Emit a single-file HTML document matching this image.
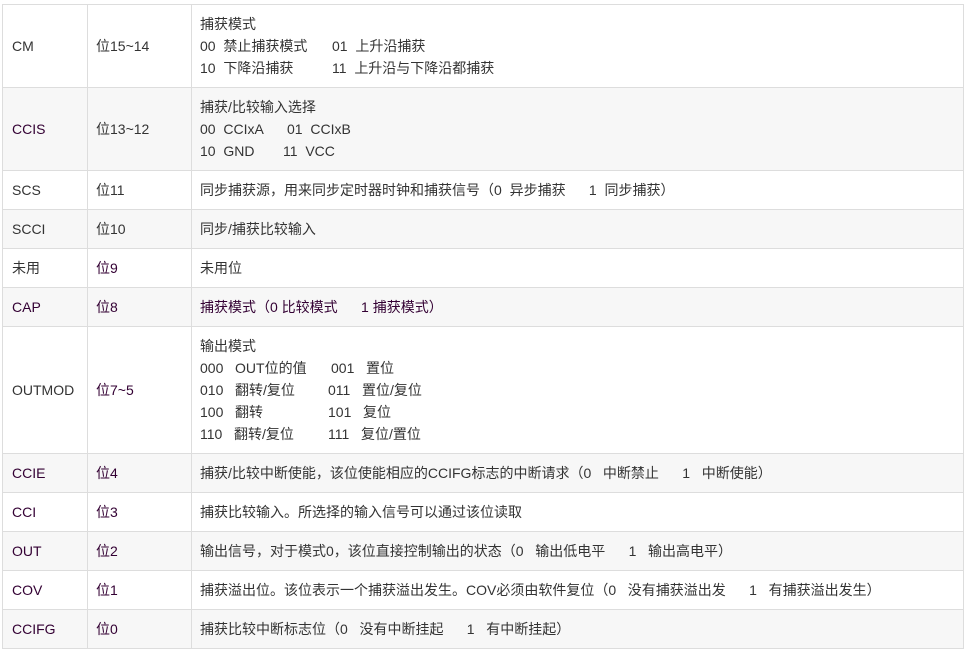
<!DOCTYPE html>
<html><head><meta charset="utf-8"><style>
body{margin:0;background:#fff;width:967px;height:652px;position:relative;font-family:"Liberation Sans","Noto Sans CJK SC",sans-serif;font-size:14px;color:#333;}
.r{position:absolute;left:2px;width:961px;border-top:1px solid #ddd;box-sizing:border-box;}
.g{background:#f7f7f7;}
.c{position:absolute;top:0;bottom:0;display:flex;align-items:center;white-space:nowrap;}
.a{left:10px;}.b{left:94px;}.d{left:198px;}
.vl{position:absolute;top:4px;height:645px;width:1px;background:#ddd;}
.p{color:#330033;}
.l{line-height:22px;}
.l span{display:inline-block;}
</style></head><body>
<div class="r" style="top:4px;height:83px"><div class="c a">CM</div><div class="c b">位15~14</div><div class="c d"><div class="l">捕获模式<br><span style="width:132px">00&nbsp; 禁止捕获模式</span>01&nbsp; 上升沿捕获<br><span style="width:132px">10&nbsp; 下降沿捕获</span>11&nbsp; 上升沿与下降沿都捕获</div></div></div>
<div class="r g" style="top:87px;height:83px"><div class="c a p">CCIS</div><div class="c b">位13~12</div><div class="c d"><div class="l">捕获/比较输入选择<br><span style="width:87px">00&nbsp; CCIxA</span>01&nbsp; CCIxB<br><span style="width:83px">10&nbsp; GND</span>11&nbsp; VCC</div></div></div>
<div class="r" style="top:170px;height:39px"><div class="c a">SCS</div><div class="c b">位11</div><div class="c d">同步捕获源，用来同步定时器时钟和捕获信号（0&nbsp; 异步捕获&nbsp;&nbsp;&nbsp;&nbsp;&nbsp; 1&nbsp; 同步捕获）</div></div>
<div class="r g" style="top:209px;height:39px"><div class="c a">SCCI</div><div class="c b">位10</div><div class="c d">同步/捕获比较输入</div></div>
<div class="r" style="top:248px;height:39px"><div class="c a">未用</div><div class="c b p">位9</div><div class="c d">未用位</div></div>
<div class="r g" style="top:287px;height:39px"><div class="c a p">CAP</div><div class="c b p">位8</div><div class="c d p">捕获模式（0 比较模式&nbsp;&nbsp;&nbsp;&nbsp;&nbsp; 1 捕获模式）</div></div>
<div class="r" style="top:326px;height:127px"><div class="c a">OUTMOD</div><div class="c b p">位7~5</div><div class="c d"><div class="l">输出模式<br><span style="width:131px">000&nbsp;&nbsp; OUT位的值</span>001&nbsp;&nbsp; 置位<br><span style="width:128px">010&nbsp;&nbsp; 翻转/复位</span>011&nbsp;&nbsp; 置位/复位<br><span style="width:128px">100&nbsp;&nbsp; 翻转</span>101&nbsp;&nbsp; 复位<br><span style="width:128px">110&nbsp;&nbsp; 翻转/复位</span>111&nbsp;&nbsp; 复位/置位</div></div></div>
<div class="r g" style="top:453px;height:39px"><div class="c a p">CCIE</div><div class="c b p">位4</div><div class="c d">捕获/比较中断使能，该位使能相应的CCIFG标志的中断请求（0&nbsp;&nbsp; 中断禁止&nbsp;&nbsp;&nbsp;&nbsp;&nbsp; 1&nbsp;&nbsp; 中断使能）</div></div>
<div class="r" style="top:492px;height:39px"><div class="c a p">CCI</div><div class="c b p">位3</div><div class="c d">捕获比较输入。所选择的输入信号可以通过该位读取</div></div>
<div class="r g" style="top:531px;height:39px"><div class="c a p">OUT</div><div class="c b p">位2</div><div class="c d">输出信号，对于模式0，该位直接控制输出的状态（0&nbsp;&nbsp; 输出低电平&nbsp;&nbsp;&nbsp;&nbsp;&nbsp; 1&nbsp;&nbsp; 输出高电平）</div></div>
<div class="r" style="top:570px;height:39px"><div class="c a p">COV</div><div class="c b p">位1</div><div class="c d">捕获溢出位。该位表示一个捕获溢出发生。COV必须由软件复位（0&nbsp;&nbsp; 没有捕获溢出发&nbsp;&nbsp;&nbsp;&nbsp;&nbsp; 1&nbsp;&nbsp; 有捕获溢出发生）</div></div>
<div class="r g" style="top:609px;height:40px;border-bottom:1px solid #ddd"><div class="c a p">CCIFG</div><div class="c b p">位0</div><div class="c d">捕获比较中断标志位（0&nbsp;&nbsp; 没有中断挂起&nbsp;&nbsp;&nbsp;&nbsp;&nbsp; 1&nbsp;&nbsp; 有中断挂起）</div></div>
<div class="vl" style="left:2px"></div><div class="vl" style="left:87px"></div><div class="vl" style="left:191px"></div><div class="vl" style="left:963px"></div>
</body></html>
